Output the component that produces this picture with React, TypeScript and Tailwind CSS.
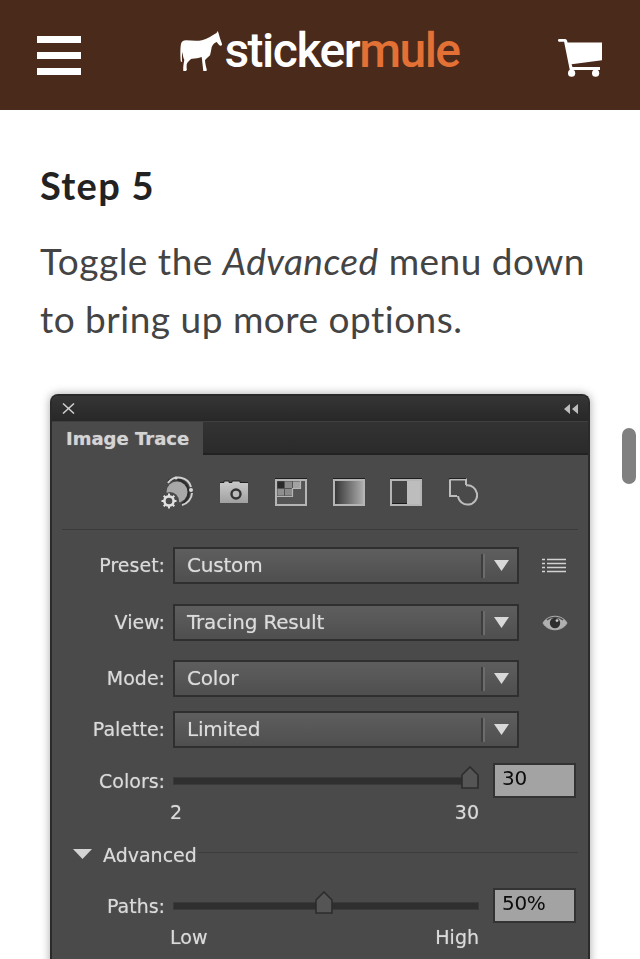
import React from "react";

const ui = "font-['DejaVu_Sans',sans-serif]";
const soft = "[text-shadow:0_0_1px_rgba(235,235,235,0.55)]";

function Horse() {
  return (
    <svg width="43" height="41" viewBox="0 0 43 41" className="shrink-0">
      <path
        fill="#fff"
        d="M1 12.7 C2 10 3.5 9.3 6 9.3 C11 9.6 17 10.3 22 9.3 C27 8.2 32 4.5 36.5 2 L37.7 0 L38.5 2 C39.5 6 41 10 42 13 C42.3 14.6 41 15 39.8 14.5 C38.5 13.5 37.5 11.8 36.7 11 C34.5 11.8 32.8 13.5 31.7 16 C31.2 19 30.8 21.5 30 24.3 C28.5 26 26 27.5 25 29.3 C25.2 32.5 26 36 26.8 38.5 L26.5 40 L23.3 40 C22.8 35.5 22.2 30.5 21.7 26 C18 27.3 15 27.8 11.7 27.7 C9.5 29 7.6 31 6.8 33 C6.5 35.3 6.6 37 6.9 38.8 L6 40 L3.3 40 C3 37 3.4 33 4.3 29 C3.4 27.5 2.8 24.5 2.5 21 C1.8 23.5 1.8 27 2.2 31 L0.8 30.5 C0.2 24.5 0.2 17 1 12.7 Z"
      />
    </svg>
  );
}

function Cart() {
  return (
    <svg width="44" height="38" viewBox="0 0 44 38" className="mt-[5px]">
      <path fill="#fff" d="M0 1.2 Q0 0 1.2 0 H7.2 Q8.6 0 9 1.5 L9.6 3.4 H44 V21.3 L13.6 25.2 L14.4 28 H42 V31 H11.8 L6.1 2.8 H1.2 Q0 2.8 0 1.2 Z" />
      <circle cx="13.6" cy="34.2" r="3.6" fill="#fff" />
      <circle cx="37.6" cy="34.2" r="3.6" fill="#fff" />
    </svg>
  );
}

function Chevron() {
  return (
    <svg width="15" height="11" viewBox="0 0 15 11">
      <path d="M0 0 H15 L7.5 11 Z" fill="#d9d9d9" />
    </svg>
  );
}

function Dropdown({ value }: { value: string }) {
  return (
    <div
      className={`h-[37px] w-[346px] shrink-0 flex items-center border-2 border-[#2f2f2f] bg-gradient-to-b from-[#5e5e5e] to-[#4f4f4f] pl-[12px] text-[20px] tracking-[-0.2px] text-[#dcdcdc] ${soft}`}
    >
      <span className="flex-1 pb-[2px]">{value}</span>
      <span className="h-[24px] w-[4px] mr-[9px] border-l-2 border-r-2 border-l-[#3e3e3e] border-r-[#6c6c6c]" />
      <span className="mr-[8px] flex"><Chevron /></span>
    </div>
  );
}

function Label({ children, low }: { children: React.ReactNode; low?: boolean }) {
  return (
    <div className={`w-[113px] text-right text-[19px] text-[#dadada] mr-[8px] shrink-0 ${low ? "mt-[2px]" : ""} ${soft}`}>
      {children}
    </div>
  );
}

function Track({ pos }: { pos: string }) {
  return (
    <div className="relative mt-[1px] h-[8px] w-[306px] bg-[#2f2f2f] border border-[#3a3a3a] shrink-0">
      <svg width="18" height="23" viewBox="0 0 18 23" className={`absolute top-[-12px] ${pos}`}>
        <path d="M1 9 L9 1 L17 9 V22 H1 Z" fill="#555" stroke="#2c2c2c" strokeWidth="1.6" />
      </svg>
    </div>
  );
}

function NumBox({ value }: { value: string }) {
  return (
    <div className="ml-[14px] h-[35px] w-[83px] shrink-0 border-2 border-[#333] bg-[#a3a3a3] pl-[7px] text-[20px] tracking-[-0.3px] leading-[27px] text-[#0c0c0c]">
      {value}
    </div>
  );
}

function ToolIcons() {
  return (
    <div className="h-[74px] pl-[108px] flex items-center">
      <svg width="34" height="35" viewBox="0 0 34 35" className="mt-[1px]">
        <path d="M8 6 A13 13 0 1 1 22 29" fill="none" stroke="#2b2b2b" strokeWidth="2.5" />
        <path d="M8 8 A13 13 0 0 1 31 12 M32 18 A13 13 0 0 1 22 30" fill="none" stroke="#cfcfcf" strokeWidth="2" />
        <circle cx="17" cy="17" r="10.5" fill="#a8a8a8" />
        <circle cx="31" cy="15" r="2" fill="#d8d8d8" />
        <circle cx="16" cy="3" r="1.6" fill="#d8d8d8" />
        <circle cx="10" cy="26" r="9" fill="#4a4a4a" />
        <circle cx="9" cy="26" r="4.6" fill="none" stroke="#e0e0e0" strokeWidth="2.6" />
        <path d="M9 18.5 V21 M9 31 V33.5 M1.5 26 H4 M14 26 H16.5 M3.7 20.7 L5.5 22.5 M12.5 29.5 L14.3 31.3 M3.7 31.3 L5.5 29.5 M12.5 22.5 L14.3 20.7" stroke="#e0e0e0" strokeWidth="2" />
      </svg>
      <svg width="28" height="24" viewBox="0 0 28 24" className="ml-[26px]">
        <defs>
          <linearGradient id="cam" x1="0" x2="0" y1="0" y2="1"><stop offset="0" stopColor="#cbcbcb" /><stop offset="1" stopColor="#a0a0a0" /></linearGradient>
        </defs>
        <path d="M0 3 H4 V1 H9 V3 H12 V1 H20 V3 H28 V23 H0 Z" fill="url(#cam)" />
        <path d="M0 2.5 H4 V1 H9 V2.5 H12 V1 H20 V2.5 H28" fill="none" stroke="#222" strokeWidth="1" />
        <circle cx="16" cy="14" r="4.5" fill="#b9b9b9" stroke="#333" strokeWidth="2.4" />
      </svg>
      <svg width="32" height="28" viewBox="0 0 32 28" className="ml-[27px]">
        <rect x="1" y="2" width="30" height="25" fill="#555" stroke="#b5b5b5" strokeWidth="2" />
        <path d="M0 .5 H32" stroke="#1f1f1f" />
        <rect x="2.5" y="3.5" width="6.5" height="6.5" fill="#2a2a2a" />
        <rect x="10" y="3.5" width="7" height="6.5" fill="#8a8a8a" />
        <rect x="18" y="3.5" width="7" height="6.5" fill="#a2a2a2" />
        <rect x="2.5" y="11" width="6.5" height="6.5" fill="#8f8f8f" />
        <rect x="10" y="11" width="7" height="6.5" fill="#8a8a8a" />
        <path d="M2 18.5 H17.5 V10.5 H25.5 V3" fill="none" stroke="#b5b5b5" strokeWidth="1.2" />
      </svg>
      <svg width="32" height="28" viewBox="0 0 32 28" className="ml-[26px]">
        <defs>
          <linearGradient id="grad1"><stop offset="0" stopColor="#333" /><stop offset="1" stopColor="#b0b0b0" /></linearGradient>
        </defs>
        <rect x="1" y="2" width="30" height="25" fill="url(#grad1)" stroke="#b5b5b5" strokeWidth="2" />
        <path d="M0 .5 H32" stroke="#1f1f1f" />
      </svg>
      <svg width="32" height="28" viewBox="0 0 32 28" className="ml-[25px]">
        <rect x="1" y="2" width="30" height="25" fill="#bdbdbd" stroke="#b5b5b5" strokeWidth="2" />
        <rect x="2" y="3" width="15" height="23" fill="#444" />
        <path d="M2 25.5 H17" stroke="#1c1c1c" />
        <path d="M0 .5 H32" stroke="#1f1f1f" />
      </svg>
      <svg width="29" height="28" viewBox="0 0 29 28" className="ml-[27px]">
        <path d="M1 1.5 H17 V7 M1 1.5 V18 H8" fill="none" stroke="#bdbdbd" strokeWidth="2" />
        <path d="M0 .5 H17" stroke="#222" />
        <path d="M17 7.5 A9.6 9.6 0 1 1 9 18" fill="none" stroke="#bdbdbd" strokeWidth="2" />
      </svg>
    </div>
  );
}

function Panel() {
  return (
    <div className={`${ui} ml-[10px] w-[540px] h-[600px] rounded-t-[8px] border-2 border-[#2a2a2a] border-b-0 bg-[#4a4a4a] shadow-[0_0_10px_rgba(0,0,0,0.35)] blur-[0.3px]`}>
      <div className="h-[25px] rounded-t-[6px] bg-gradient-to-b from-[#353535] to-[#282828] flex items-center justify-between pl-[10px] pr-[9px]">
        <svg width="13" height="11" viewBox="0 0 13 11">
          <path d="M1 0.5 L12 10.5 M12 0.5 L1 10.5" stroke="#cfcfcf" strokeWidth="1.5" />
        </svg>
        <svg width="15" height="10" viewBox="0 0 15 10">
          <path d="M6 0 V10 L0 5 Z M14 0 V10 L8 5 Z" fill="#bdbdbd" />
        </svg>
      </div>
      <div className="h-[34px] flex bg-gradient-to-b from-[#333] to-[#2a2a2a] border-t border-[#3f3f3f]">
        <div className={`w-[151px] bg-[#4a4a4a] pl-[14px] text-[18px] font-bold leading-[34px] text-[#d4d4d4] ${soft}`}>Image Trace</div>
        <div className="flex-1 border-b-2 border-[#222]" />
      </div>
      <ToolIcons />
      <div className="mx-[10px] h-[1px] bg-[#3a3a3a]" />
      <div className="mt-[17px] flex flex-col">
        <div className="flex items-center">
          <Label>Preset:</Label>
          <Dropdown value="Custom" />
          <svg width="24" height="16" viewBox="0 0 24 16" className="ml-[23px]">
            <path d="M0 1.5 H3 M5 1.5 H24 M0 5.5 H3 M5 5.5 H24 M0 9.5 H3 M5 9.5 H24 M0 13.5 H3 M5 13.5 H24" stroke="#d2d2d2" strokeWidth="1.6" />
          </svg>
        </div>
        <div className="mt-[20px] flex items-center">
          <Label>View:</Label>
          <Dropdown value="Tracing Result" />
          <svg width="26" height="20" viewBox="0 0 26 20" className="ml-[23px]">
            <path d="M1 10 C6 1 20 1 25 10 C20 19 6 19 1 10 Z" fill="#b0b0b0" stroke="#b0b0b0" />
            <path d="M5 7 C9 3.5 17 3.5 21 7" fill="none" stroke="#4a4a4a" strokeWidth="1.2" />
            <circle cx="13" cy="10" r="5.2" fill="#2e2e2e" />
            <circle cx="15" cy="7.6" r="1.4" fill="#c8c8c8" />
          </svg>
        </div>
        <div className="mt-[19px] flex items-center">
          <Label>Mode:</Label>
          <Dropdown value="Color" />
        </div>
        <div className="mt-[14px] flex items-center">
          <Label>Palette:</Label>
          <Dropdown value="Limited" />
        </div>
        <div className="mt-[15px] flex items-center">
          <Label low>Colors:</Label>
          <Track pos="right-[-1px]" />
          <NumBox value="30" />
        </div>
        <div className={`mt-[1px] flex justify-between w-[427px] pl-[118px] text-[19px] leading-[26px] text-[#dadada] ${soft}`}>
          <span>2</span>
          <span>30</span>
        </div>
        <div className={`mt-[17px] flex items-center pl-[21px] text-[19px] text-[#dadada] ${soft}`}>
          <svg width="19" height="10" viewBox="0 0 19 10" className="mr-[11px] mt-[-3px]">
            <path d="M0 0 H19 L9.5 10 Z" fill="#d4d4d4" />
          </svg>
          <span className="leading-[26px]">Advanced</span>
          <span className="ml-[1px] mr-[10px] mb-[5px] h-[1px] flex-1 bg-[#3c3c3c]" />
        </div>
        <div className="mt-[20px] flex items-center">
          <Label low>Paths:</Label>
          <Track pos="left-[141px]" />
          <NumBox value="50%" />
        </div>
        <div className={`mt-[1px] flex justify-between w-[427px] pl-[118px] text-[19px] leading-[26px] text-[#dadada] ${soft}`}>
          <span>Low</span>
          <span>High</span>
        </div>
      </div>
    </div>
  );
}

export default function App() {
  return (
    <div className="relative h-[959px] w-[640px] overflow-hidden bg-white">
      <header className="flex h-[110px] items-center justify-between bg-[#4a2a1b] pl-[37px] pr-[38px]">
        <div className="flex w-[44px] flex-col gap-[9px]">
          <div className="h-[7px] bg-white" />
          <div className="h-[7px] bg-white" />
          <div className="h-[7px] bg-white" />
        </div>
        <div className="flex items-center mt-[-8px] ml-[1px]">
          <Horse />
          <span className="ml-[1px] font-['Roboto',sans-serif] text-[48px] font-medium leading-[48px] tracking-[-1.5px] text-white">
            sticker<span className="text-[#e37035]">mule</span>
          </span>
        </div>
        <Cart />
      </header>
      <main className="px-[40px] pt-[50px] font-['Lato',sans-serif] text-[#222]">
        <h2 className="text-[38px] font-bold leading-[50px] tracking-[1.3px]">Step 5</h2>
        <p className="mt-[22px] text-[37px] leading-[58px] tracking-[0.5px] text-[#444]">
          Toggle the <em>Advanced</em> menu down to bring up more options.
        </p>
      </main>
      <div className="mt-[46px] ml-[40px]">
        <Panel />
      </div>
      <div className="absolute left-[622px] top-[428px] h-[56px] w-[14px] rounded-full bg-[#808080]" />
    </div>
  );
}
